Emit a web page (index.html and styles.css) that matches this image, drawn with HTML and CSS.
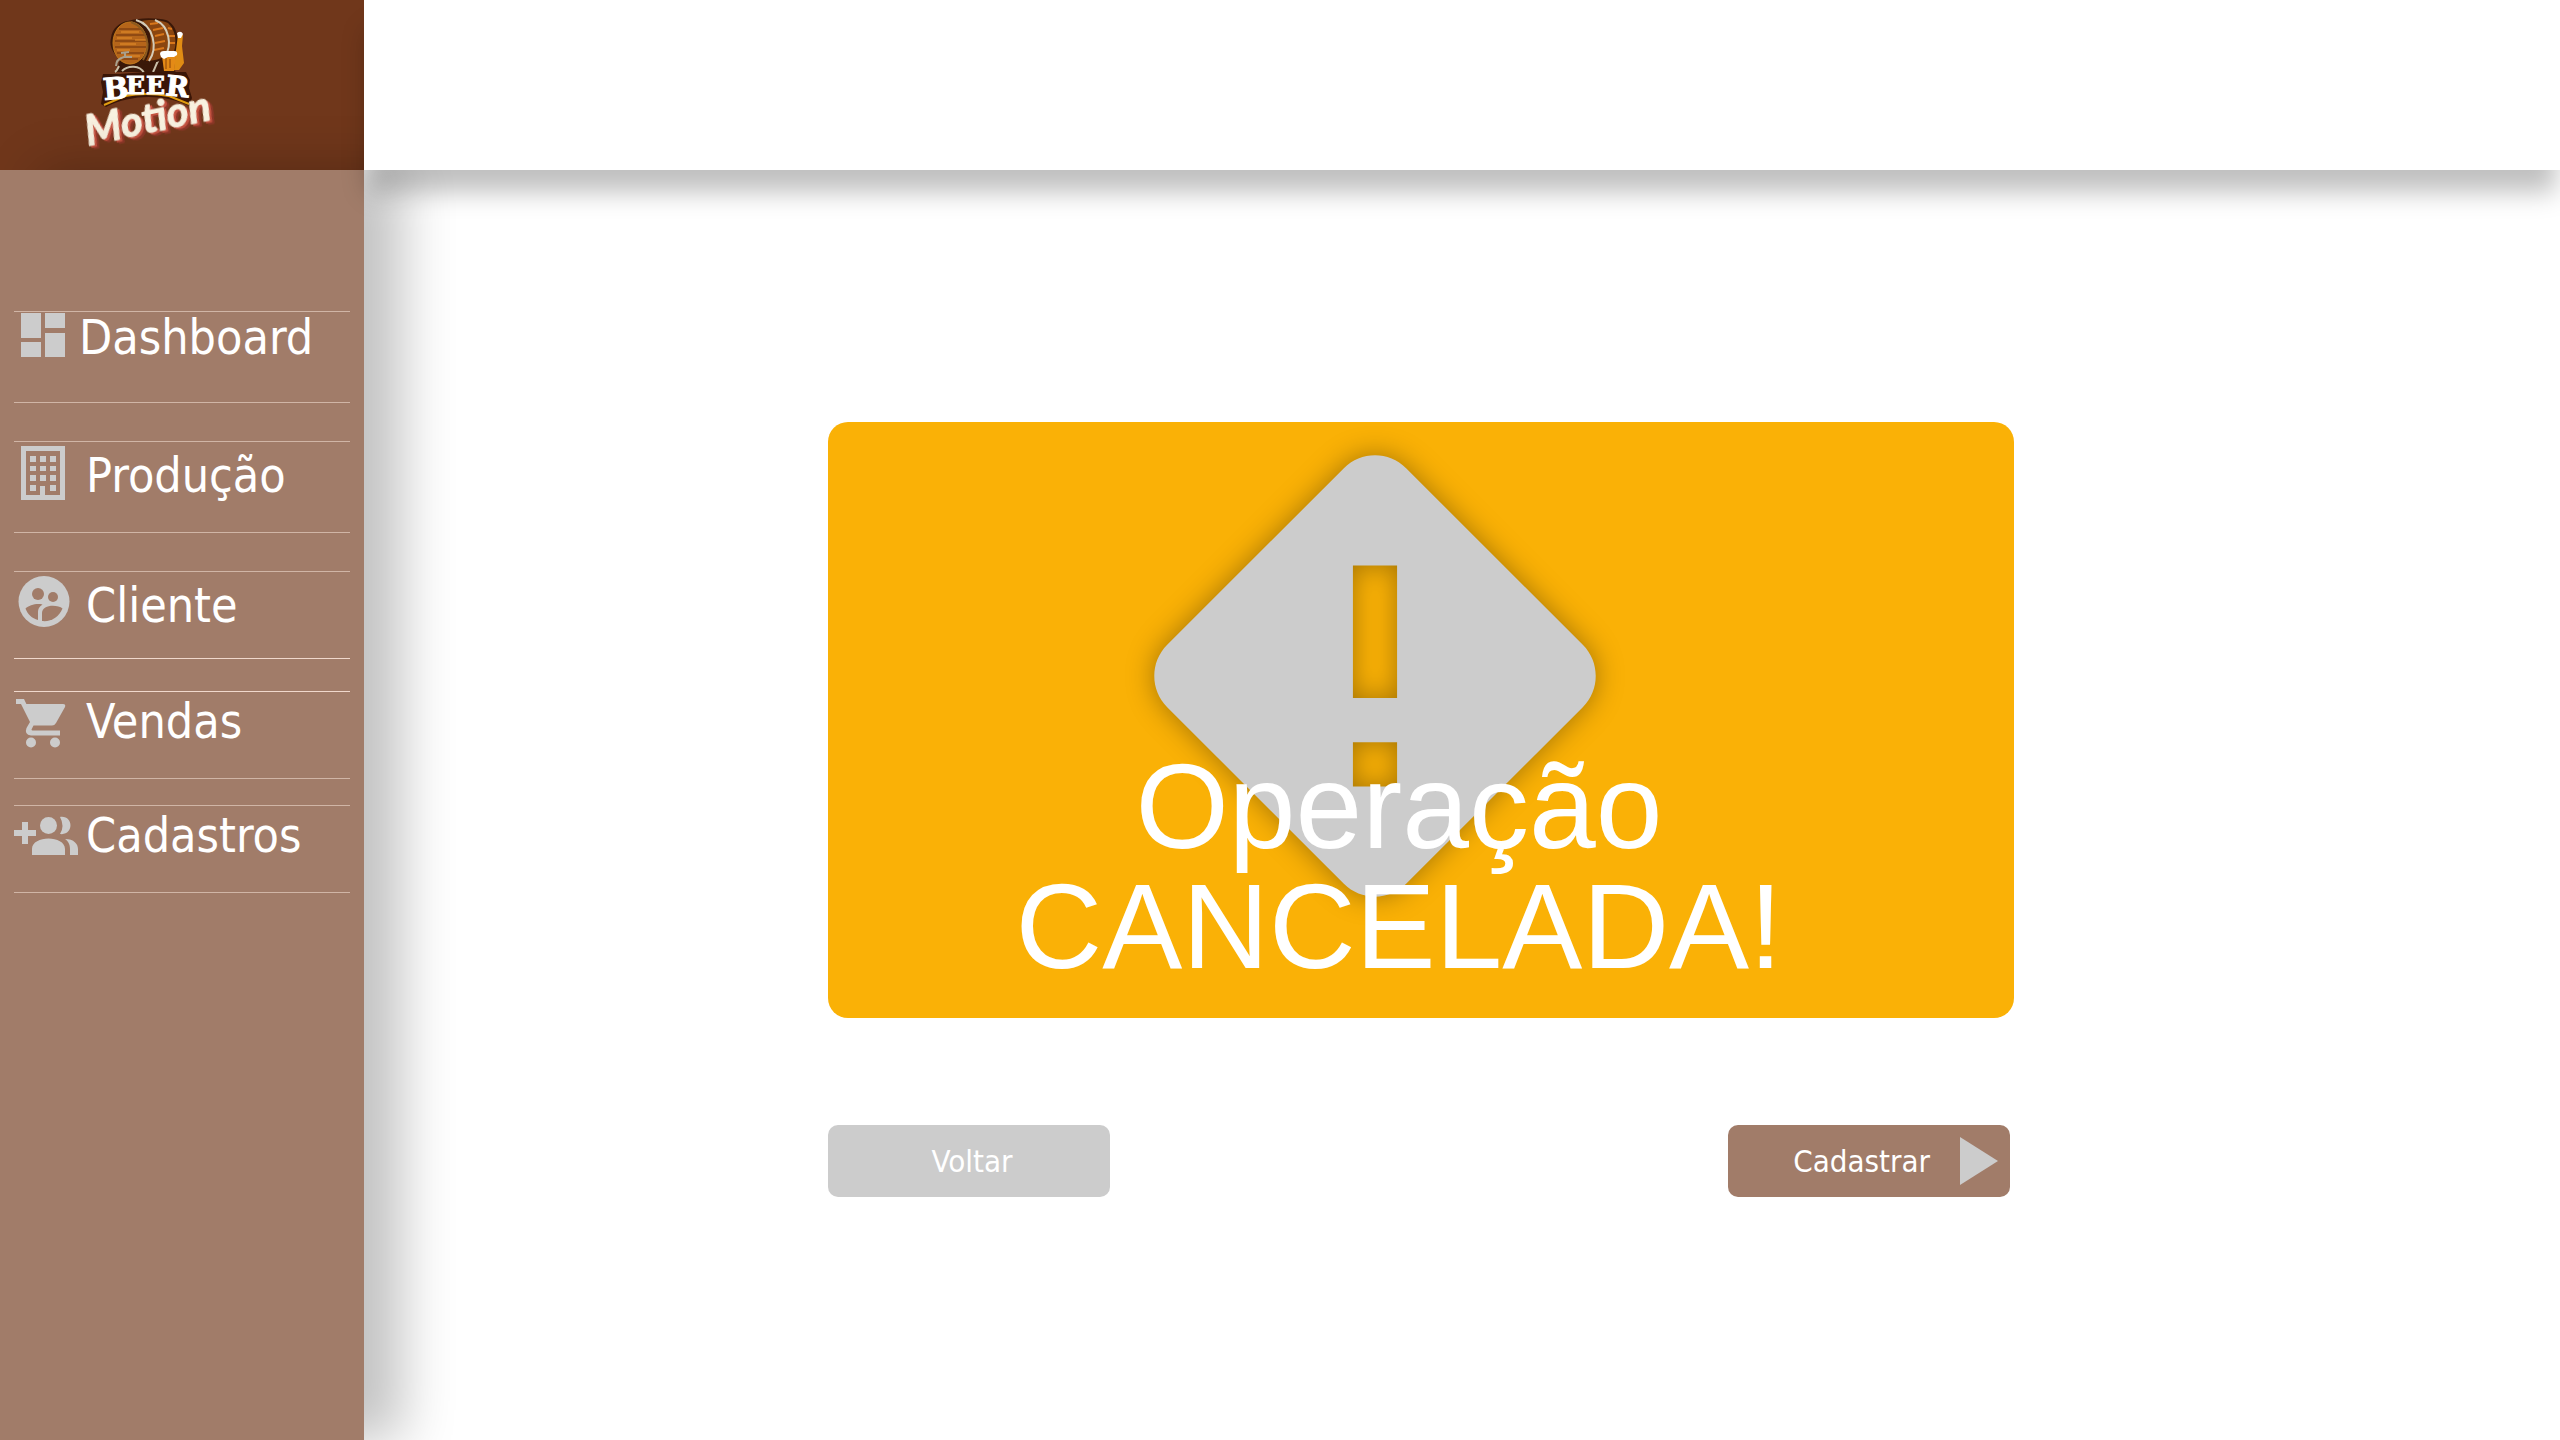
FILE: index.html
```html
<!DOCTYPE html>
<html lang="pt-BR">
<head>
<meta charset="utf-8">
<title>Beer Motion</title>
<link rel="stylesheet" href="styles.css">
</head>
<body>
<div class="app">
  <a class="brand" href="#" aria-label="Beer Motion">
    <svg class="logo" width="144" height="148" viewBox="80 10 144 148">
      <!-- barrel stand -->
      <path d="M116 72L120 60L160 58L176 72Z" fill="#3a1808"/>
      <path d="M115 72c2-1 3-4 4-6M122 71c6-6 18-6 22 2h8M153 72c4-8 4-12 8-14" fill="none" stroke="#c9bfa8" stroke-width="2"/>
      <!-- barrel -->
      <path d="M128 21C140 17 158 18 166 20C176 24 180 38 177 50C172 58 150 66 136 65C118 62 108 50 111 38C112 28 120 22 128 21Z" fill="#3a1808"/>
      <path d="M142 21C150 19 162 20 168 23C176 30 177 44 174 51C166 57 156 61 146 61C152 50 154 30 142 21Z" fill="#8a4510"/>
      <path d="M150 24L158 23M153 30L163 28M155 36L164 34M155 43L165 41M154 50L164 48M168 28L172 29M168 36L175 36M168 43L175 43" stroke="#d9771b" stroke-width="2"/>
      <ellipse cx="130" cy="43" rx="17" ry="21" fill="#b5651a" stroke="#c47a1c"/>
      <path d="M119 29H141M116 35H145M115 41H146M115 47H146M117 53H144M122 59H138" stroke="#6b300c" stroke-width="1"/>
      <path d="M121 32H139M117 38H132M135 40H146M120 44H136M117 50H130M124 56H140" stroke="#e8912a" stroke-width="1"/>
      <path d="M136 20C154 25 158 48 149 61M155 20C170 26 172 46 165 56" fill="none" stroke="#d5ccb8" stroke-width="2"/>
      <path d="M131 22C147 28 152 46 143 60" fill="none" stroke="#8b5a20" stroke-width="2"/>
      <path d="M116 66c0-6 4-8 8-9l8 0M125 52v6M121 53l8-1" fill="none" stroke="#aaa08c" stroke-width="2"/>
      <!-- bottle and mug -->
      <path d="M178 35L183 35L182 46L184 63L179 70H174L176 50Z" fill="#e08c14"/>
      <path d="M177 33q4-3 6 1l-2 4h-3z" fill="#fff"/>
      <path d="M162 56H176L174 71H164Z" fill="#e48a16"/>
      <path d="M166 58v11M170 59v9" stroke="#8a4208"/>
      <path d="M160 54q0-3 4-3h10q4 0 3 4l-3 2h-6l-4 2-3-2z" fill="#fff"/>
      <!-- BEER -->
      <path d="M103 74H120L145 72H186L190 80L189 88L192 98L189 106C164 94 132 94 106 107L101 104L103 92L101 82Z" fill="#3a1506"/>
      <path d="M104 105L125 96Q146 92 169 96L189 104" fill="none" stroke="#e09c10" stroke-width="2"/>
      <g class="logo-beer">
        <text x="104" y="100" font-size="30" transform="rotate(-5 104 100)">B</text>
        <text x="126" y="94" font-size="25">E</text>
        <text x="146" y="94" font-size="25">E</text>
        <text x="165" y="95" font-size="28" transform="rotate(6 165 95)">R</text>
      </g>
      <!-- Motion -->
      <text class="logo-motion" x="88" y="146" transform="rotate(-12 88 146)">Motion</text>
    </svg>
  </a>
  <header class="topbar"></header>
  <nav class="sidebar" aria-label="Principal">
    <a class="item tall first" href="#">
      <svg class="icon" viewBox="0 1 64 60"><path d="M7 2h20v25H7zM31 2h20v15H31zM31 22h20v24H31zM7 31h20v15H7z"/></svg>
      <span>Dashboard</span>
    </a>
    <a class="item tall low" href="#">
      <svg class="icon" viewBox="0 1 64 60"><path fill-rule="evenodd" d="M7 5h44v54H7zM12 10v44h14v-9h5v9h15V10z"/><path d="M16 15h6v6h-6zM26 15h6v6h-6zM36 15h6v6h-6zM16 25h6v5h-6zM26 25h6v5h-6zM36 25h6v5h-6zM16 34h6v6h-6zM26 34h6v6h-6zM36 34h6v6h-6zM16 44h6v6h-6zM36 44h6v6h-6z"/></svg>
      <span>Produção</span>
    </a>
    <a class="item low bright-bottom" href="#">
      <svg class="icon" viewBox="0 1 64 60"><circle cx="30" cy="30.500" r="25.500"/><g class="cut"><circle cx="24" cy="23" r="6"/><circle cx="39" cy="26" r="5"/><path d="M11.500 37.500C15 34 23 32 28.500 33.500C25 36 24 38 24 41V49C18 47.500 13.500 43 11.500 37.500Z"/><path d="M28 50V42C28 33 44 33.500 48.500 37.500C45 46 37 51 28 50Z"/></g></svg>
      <span>Cliente</span>
    </a>
    <a class="item bright-top" href="#">
      <svg class="icon" viewBox="0 1 64 60"><path fill-rule="evenodd" d="M2 8h8l2.400 5H49q3 0 2 3L42 32q-1.500 2.500-4 2.500H19.500L17.500 38.500q0 1 1 1H46v5H17q-7-1-4.500-7.500L16 31 7 13H2z"/><circle cx="17" cy="51.500" r="5"/><circle cx="41" cy="51.500" r="5"/></svg>
      <span>Vendas</span>
    </a>
    <a class="item" href="#">
      <svg class="icon" viewBox="0 1 64 60"><path d="M8 17h6v8h8v6h-8v8H8v-8H0v-6h8z"/><circle cx="34.500" cy="20.500" r="8.500"/><path d="M18 50v-6c0-14 33-14 33 0v6zM46 12c14-2 14 19 0 17q5-8 0-17zM51 34c9 0 13 5 13 10v6h-8v-6c0-5-2-8-5-10z"/></svg>
      <span>Cadastros</span>
    </a>
  </nav>
  <main class="content">
    <div class="panel">
      <section class="alert" role="alert">
        <svg class="alert-icon" viewBox="0 0 24 24" aria-hidden="true"><path d="M12 2c-.51 0-1.020.2-1.410.59l-8 8c-.78.78-.78 2.040 0 2.820l8 8c.78.78 2.040.78 2.820 0l8-8c.78-.78.78-2.040 0-2.820l-8-8C13.020 2.200 12.510 2 12 2zm-1 5h2v6h-2V7zm0 8h2v2h-2v-2z"/></svg>
        <h1 class="alert-text">Operação<br>CANCELADA!</h1>
      </section>
      <div class="actions">
        <button class="btn back" type="button">Voltar</button>
        <button class="btn submit" type="button"><span>Cadastrar</span><svg class="play" viewBox="0 0 38 48" aria-hidden="true"><path d="M0 0L38 24L0 48Z"/></svg></button>
      </div>
    </div>
  </main>
</div>
</body>
</html>
```
FILE: styles.css
```css
* { box-sizing: border-box; }

body {
  margin: 0;
  background: #fff;
  font-family: "DejaVu Sans Condensed", "DejaVu Sans", sans-serif;
  color: #fff;
}

.app {
  display: grid;
  grid-template-columns: 364px 1fr;
  grid-template-rows: 170px 1fr;
  min-height: 100vh;
  overflow: hidden;
}

.brand {
  background: #70371b;
  padding: 10px 80px;
}

.logo {
  display: block;
  overflow: visible;
}

.logo-beer {
  font-family: "DejaVu Serif", serif;
  font-weight: 700;
  fill: #fff;
  stroke: #fff;
}

.logo-motion {
  fill: #f8f1e0;
  stroke: #f8f1e0;
  stroke-width: 1px;
  stroke-linejoin: round;
  font: italic 700 42px Lato, sans-serif;
  filter: drop-shadow(2px 2px 0 #c45240) drop-shadow(2px 2px 0 #8c3728);
}

.topbar {
  z-index: 3;
  background: #fff;
  box-shadow: 0 26px 24px -4px rgba(0, 0, 0, 0.25);
}

.sidebar {
  z-index: 2;
  display: flex;
  flex-direction: column;
  padding: 141px 14px 0;
  background: #a17c69;
  box-shadow: 38px 0 50px rgba(0, 0, 0, 0.24);
}

.item {
  display: flex;
  align-items: flex-start;
  gap: 8px;
  height: 88px;
  margin-bottom: 26px;
  border-top: 1px solid #d0b5a6;
  border-bottom: 1px solid #d0b5a6;
  color: #fff;
  font-size: 48px;
  line-height: 50px;
  text-decoration: none;
}

.item span { padding-top: 4px; }
.item.tall { height: 92px; margin-bottom: 38px; }
.item.first { gap: 1px; }
.item.first span { padding-top: 0; }
.item.low span { padding-top: 8px; }
.item.bright-bottom { margin-bottom: 32px; border-bottom-color: #f0d8cc; }
.item.bright-top { border-top-color: #f0d8cc; }

.icon {
  flex: none;
  width: 64px;
  height: 60px;
  fill: #ccc;
}

.cut { fill: #a17c69; }

.content {
  display: flex;
  justify-content: center;
  padding: 252px 82px 0 0;
}

.panel { width: 1186px; }

.alert {
  position: relative;
  display: flex;
  justify-content: center;
  height: 596px;
  padding: 324px 44px 0 0;
  border-radius: 20px;
  background: #fab106;
}

.alert-icon {
  position: absolute;
  top: -11px;
  left: 282px;
  width: 530px;
  height: 530px;
  fill: #ccc;
  filter: drop-shadow(0 0 14px rgba(0, 0, 0, 0.35));
}

.alert-text {
  position: relative;
  margin: 0;
  font: 400 120px/120px "Liberation Sans", Arial, sans-serif;
  text-align: center;
}

.actions {
  display: flex;
  justify-content: space-between;
  margin-top: 107px;
  padding-right: 4px;
}

.btn {
  width: 282px;
  height: 72px;
  border: 0;
  border-radius: 10px;
  color: #fff;
  font-family: inherit;
  font-size: 31px;
}

.back {
  padding: 0 0 0 6px;
  background: #ccc;
}

.submit {
  display: flex;
  align-items: center;
  justify-content: flex-end;
  gap: 30px;
  padding: 0 12px;
  background: #a17c69;
}

.play {
  width: 38px;
  height: 48px;
  fill: #ccc;
}
```
